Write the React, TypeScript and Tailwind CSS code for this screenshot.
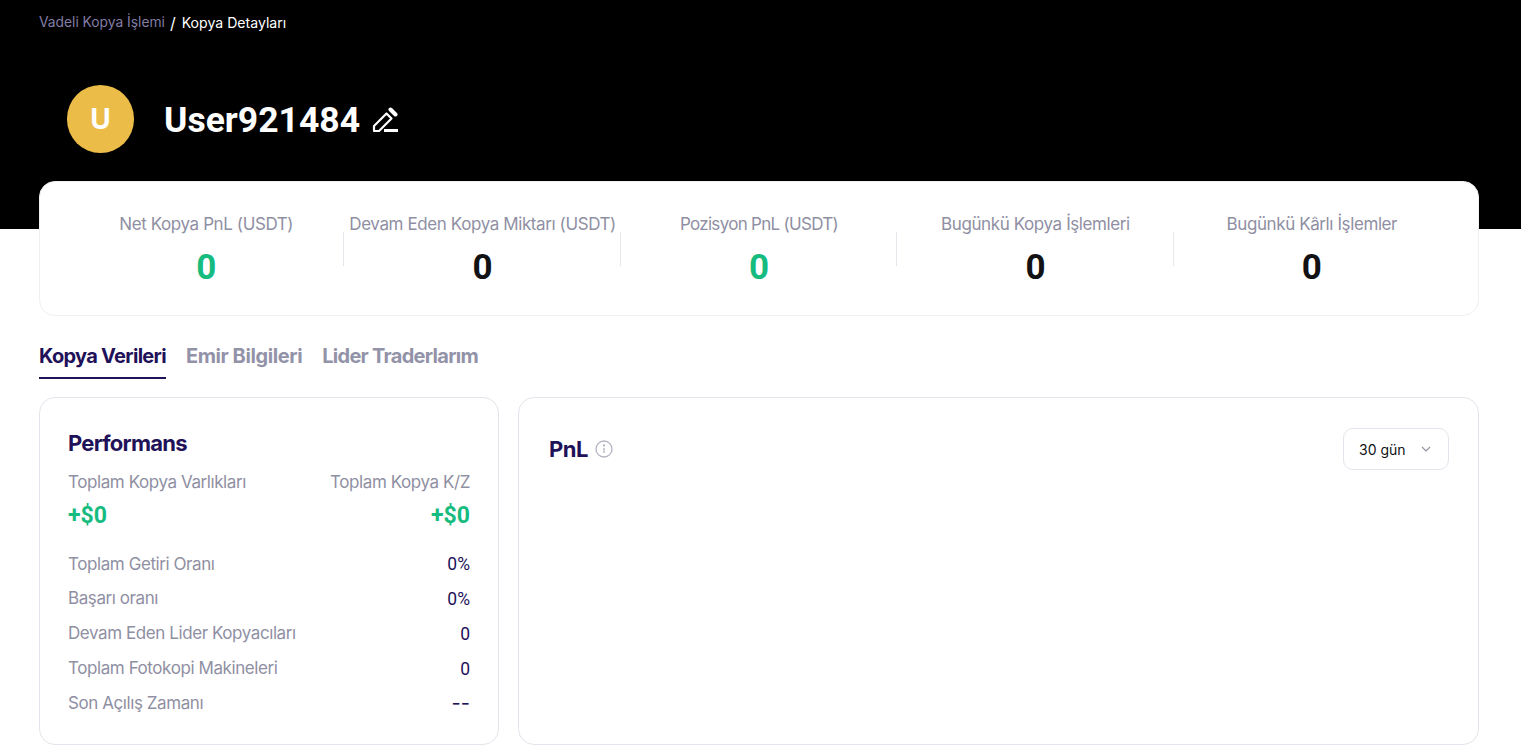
import React from "react";

const digits = "font-[Roboto,sans-serif]";

function Stat({ label, value, green, divider, track = "tracking-[-0.4px]" }: { label: string; value: string; green?: boolean; divider?: boolean; track?: string }) {
  return (
    <div className="relative flex flex-1 flex-col items-center">
      <div className={`whitespace-nowrap text-[17px] leading-[24px] text-[#8f8fa3] ${track}`}>{label}</div>
      <div className={`${digits} mt-[11px] text-[35px] font-bold leading-[42px] ${green ? "text-[#16bb7f]" : "text-[#121214]"}`}>{value}</div>
      {divider && <div className="absolute right-0 top-[20px] h-[34px] w-px bg-[#e6e6ec]" />}
    </div>
  );
}

function Row({ label, value, dash }: { label: string; value: string; dash?: boolean }) {
  return (
    <div className="flex h-[34.75px] items-center justify-between text-[17px]">
      <span className="tracking-[-0.42px] text-[#8f8fa3]">{label}</span>
      {dash ? (
        <span className="text-[20px] text-[#1f1259]">{value}</span>
      ) : (
        <span className={`${digits} text-[17.5px] text-[#1f1259]`}>{value}</span>
      )}
    </div>
  );
}

export default function App() {
  return (
    <div className="h-[755px] overflow-hidden bg-white font-[Inter,sans-serif]">
      <div className="h-[229px] bg-black px-[39px]">
        <div className="flex h-[45px] items-center">
          <span className="text-[13.8px] text-[#837da6]">Vadeli Kopya İşlemi</span>
          <span className="ml-[5px] text-[16px] text-white">/</span>
          <span className="ml-[6px] text-[14.1px] text-white">Kopya Detayları</span>
        </div>
        <div className="ml-[28px] mt-[40px] flex items-center">
          <div className="flex h-[68px] w-[67px] items-center justify-center rounded-full bg-[#ebbc48] text-[28px] font-bold text-white">U</div>
          <div className={`${digits} ml-[30px] mt-[2px] text-[35.5px] font-bold leading-[40px] text-white`}>User921484</div>
          <svg className="ml-[12px] mt-[2px]" width="28" height="26" viewBox="0 0 28 26" fill="none" stroke="#fff">
            <path d="M2 24v-5L14.5 6.5l5 5L7 24z" strokeWidth="2.2" strokeLinejoin="round" />
            <path d="M18.5 2.5l5 5" strokeWidth="4" strokeLinecap="round" />
            <path d="M12 23.5h14" strokeWidth="3" />
          </svg>
        </div>
      </div>

      <div className="relative ml-[39px] mr-[42px] -mt-[48px] flex h-[135px] rounded-[16px] border border-[#f0f0f4] bg-white px-[28px] pt-[30px]">
        <Stat label="Net Kopya PnL (USDT)" value="0" green divider />
        <Stat label="Devam Eden Kopya Miktarı (USDT)" value="0" divider />
        <Stat label="Pozisyon PnL (USDT)" value="0" green divider track="tracking-[-0.7px]" />
        <Stat label="Bugünkü Kopya İşlemleri" value="0" divider />
        <Stat label="Bugünkü Kârlı İşlemler" value="0" />
      </div>

      <div className="ml-[39px] mr-[42px] mt-[20px] flex h-[43px] gap-[20px] text-[20px] font-bold leading-[41px] tracking-[-0.7px]">
        <div className="h-[43px] border-b-2 border-[#1f1259] text-[#1f1259]">Kopya Verileri</div>
        <div className="tracking-[-0.4px] text-[#9292a8]">Emir Bilgileri</div>
        <div className="text-[#9292a8]">Lider Traderlarım</div>
      </div>

      <div className="ml-[39px] mr-[42px] mt-[18px] flex h-[348px] gap-[19px]">
        <div className="w-[460px] shrink-0 rounded-[16px] border border-[#e4e4ec] px-[28px] pt-[31px]">
          <div className="text-[22px] font-bold leading-[28px] tracking-[-0.75px] text-[#1f1259]">Performans</div>
          <div className="mt-[13px] flex justify-between text-[17px] leading-[24px] tracking-[-0.42px] text-[#8f8fa3]">
            <span>Toplam Kopya Varlıkları</span>
            <span>Toplam Kopya K/Z</span>
          </div>
          <div className={`${digits} mt-[7px] flex justify-between text-[23px] font-bold leading-[30px] text-[#16bb7f]`}>
            <span>+$0</span>
            <span>+$0</span>
          </div>
          <div className="mt-[16px]">
            <Row label="Toplam Getiri Oranı" value="0%" />
            <Row label="Başarı oranı" value="0%" />
            <Row label="Devam Eden Lider Kopyacıları" value="0" />
            <Row label="Toplam Fotokopi Makineleri" value="0" />
            <Row label="Son Açılış Zamanı" value="--" dash />
          </div>
        </div>
        <div className="flex flex-1 items-start justify-between rounded-[16px] border border-[#e4e4ec] pl-[30px] pr-[29px] pt-[30px]">
          <div className="mt-[5px] flex items-center">
            <span className="text-[22px] font-bold leading-[32px] tracking-[-0.5px] text-[#1f1259]">PnL</span>
            <svg className="ml-[7px]" width="18" height="18" viewBox="0 0 18 18" fill="none" stroke="#b4b4c2" strokeWidth="1.3">
              <circle cx="9" cy="9" r="8" />
              <path d="M9 8v5" />
              <circle cx="9" cy="5.5" r="0.5" fill="#b4b4c2" />
            </svg>
          </div>
          <div className="flex h-[42px] w-[106px] items-center justify-between rounded-[10px] border border-[#e4e4ec] pl-[15px] pr-[17px] text-[14px] text-[#121214]">
            <span>30 gün</span>
            <svg width="10" height="6" viewBox="0 0 10 6" fill="none" stroke="#8f8fa3" strokeWidth="1.1">
              <path d="M1 1l4 4 4-4" />
            </svg>
          </div>
        </div>
      </div>
    </div>
  );
}
